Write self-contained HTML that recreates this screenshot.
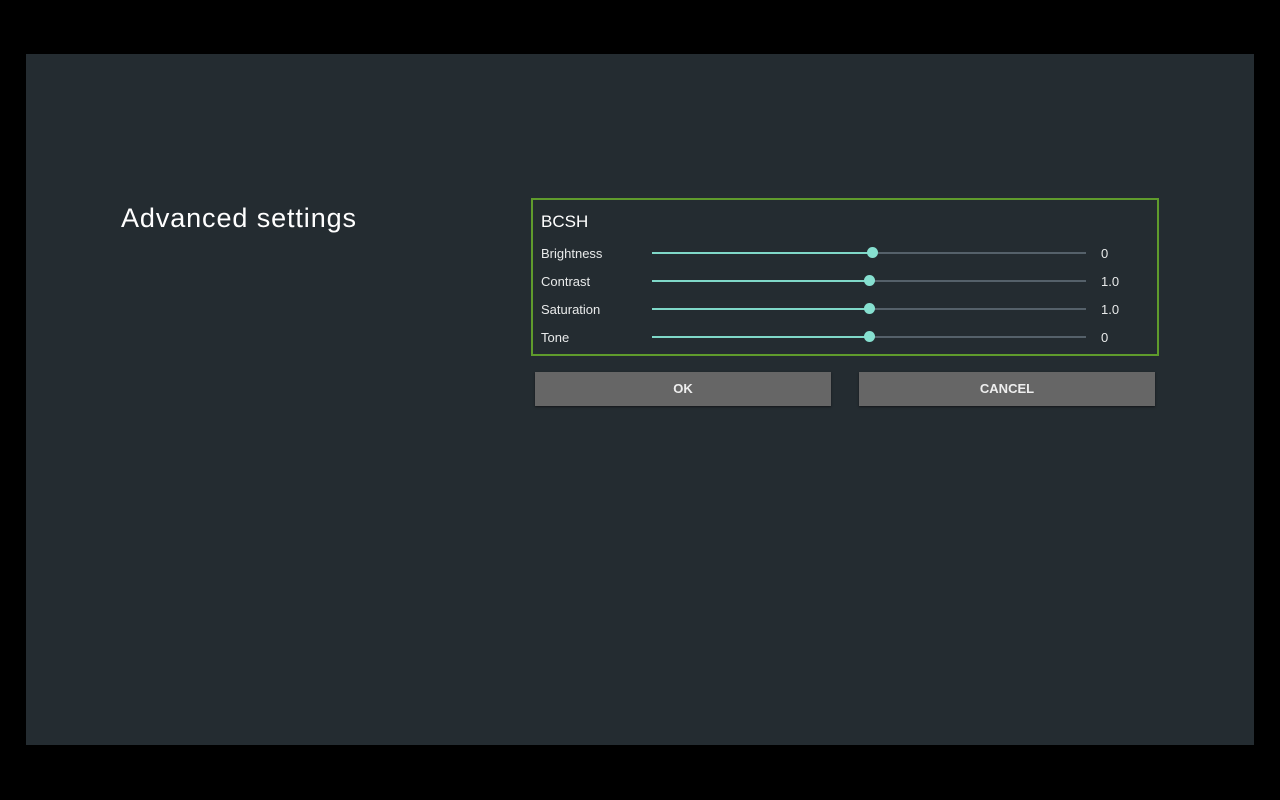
<!DOCTYPE html>
<html><head><style>
body{margin:0;width:1280px;height:800px;background:#000;font-family:"Liberation Sans",sans-serif;overflow:hidden;position:relative}
.panel{position:absolute;left:26px;top:54px;width:1228px;height:691px;background:#242c31}
.t{position:absolute;color:#fff}
.box{position:absolute;left:531px;top:198px;width:624px;height:154px;border:2px solid #5f9b2c}
.tr{position:absolute;left:652px;width:434px;height:2px;background:#55616a}
.fill{position:absolute;left:652px;height:2px;background:#7fd8c8}
.th{position:absolute;width:11px;height:11px;border-radius:50%;background:#86e0d0}
.lbl{position:absolute;left:541px;font-size:13px;color:#e8eaea}
.val{position:absolute;left:1101px;font-size:13px;color:#e8eaea}
.btn{position:absolute;top:372px;width:296px;height:34px;background:#666;color:#eee;font-size:13px;font-weight:bold;text-align:center;line-height:34px;box-shadow:0 1px 2px rgba(0,0,0,.5)}
</style></head><body>
<div class="panel"></div>
<div class="t" style="left:121px;top:203px;font-size:27px;letter-spacing:0.9px">Advanced settings</div>
<div class="box"></div>
<div class="t" style="left:541px;top:212px;font-size:17px">BCSH</div>

<div class="lbl" style="top:246px">Brightness</div>
<div class="tr" style="top:252px"></div><div class="fill" style="top:252px;width:220px"></div><div class="th" style="left:867px;top:247px"></div>
<div class="val" style="top:246px">0</div>

<div class="lbl" style="top:274px">Contrast</div>
<div class="tr" style="top:280px"></div><div class="fill" style="top:280px;width:217px"></div><div class="th" style="left:864px;top:275px"></div>
<div class="val" style="top:274px">1.0</div>

<div class="lbl" style="top:302px">Saturation</div>
<div class="tr" style="top:308px"></div><div class="fill" style="top:308px;width:217px"></div><div class="th" style="left:864px;top:303px"></div>
<div class="val" style="top:302px">1.0</div>

<div class="lbl" style="top:330px">Tone</div>
<div class="tr" style="top:336px"></div><div class="fill" style="top:336px;width:217px"></div><div class="th" style="left:864px;top:331px"></div>
<div class="val" style="top:330px">0</div>

<div class="btn" style="left:535px">OK</div>
<div class="btn" style="left:859px">CANCEL</div>
</body></html>
